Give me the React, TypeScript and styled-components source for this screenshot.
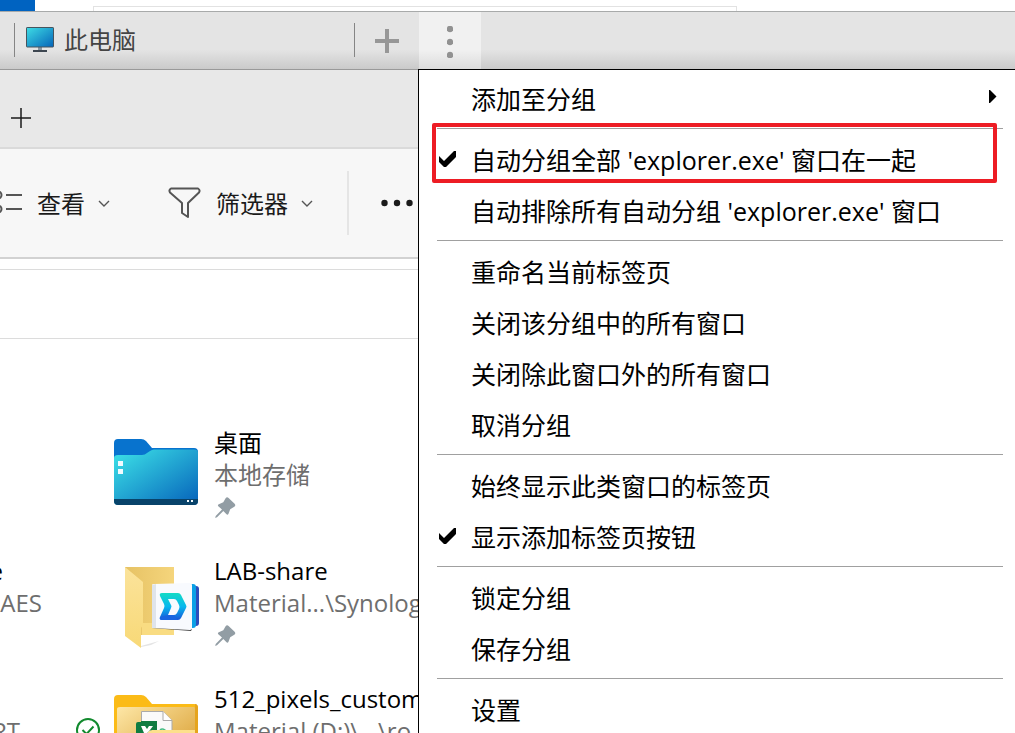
import React from 'react';
import styled, { createGlobalStyle } from 'styled-components';

const Global = createGlobalStyle`
  * { box-sizing: border-box; }
  html, body, #root { height: 100%; }
  body {
    margin: 0;
    overflow: hidden;
    background: #fff;
    color: #000;
    font-family: "Open Sans", "Noto Sans CJK SC", sans-serif;
    font-size: 24px;
    line-height: 32px;
  }
  button {
    margin: 0;
    padding: 0;
    border: 0;
    background: none;
    color: inherit;
    font: inherit;
    text-align: left;
    white-space: nowrap;
  }
  svg { display: block; flex: none; }
`;

const Page = styled.div`
  display: flex;
  flex-direction: column;
  height: 100vh;
  overflow: hidden;
`;

const Backdrop = styled.div`
  display: flex;
  flex: none;
  align-items: flex-end;
  height: 11px;
`;

const BlueBlock = styled.div`
  width: 35px;
  height: 11px;
  margin-right: 58px;
  background: #0063c1;
`;

const BackWindow = styled.div`
  flex: 0 1 644px;
  height: 5px;
  border: 1px solid #e2e2e2;
  border-bottom: 0;
`;

const TabStrip = styled.header`
  position: relative;
  display: flex;
  flex: none;
  height: 59px;
  padding-left: 14px;
  border-top: 1px solid #a8aaaa;
  border-bottom: 1px solid #999;
  background: linear-gradient(#e4e4e4 0 66%, #cacaca);
`;

const Tab = styled.button`
  display: flex;
  flex: none;
  align-items: center;
  gap: 9px;
  width: 341px;
  height: 34px;
  margin-top: 11px;
  padding-left: 11px;
  border: solid #858585;
  border-width: 0 1px;
  color: #444;
`;

const StripButton = styled.button<{ $open?: boolean }>`
  display: flex;
  flex: none;
  align-items: center;
  justify-content: center;
  width: ${p => (p.$open ? 62 : 64)}px;
  padding-top: ${p => (p.$open ? 2 : 0)}px;
  background: ${p => (p.$open ? 'linear-gradient(#f1f1f1 0 66%, #dcdcdc)' : 'none')};
`;

const MenuAnchor = styled.div`
  position: relative;
  display: flex;
`;

const Menu = styled.div`
  position: absolute;
  z-index: 2;
  top: 57px;
  left: -1px;
  width: calc(100vw - 418px);
  padding: 3px 0 24px;
  border: solid #000;
  border-width: 1px 0 0 1px;
  background: #fff;
  font-size: 25px;
`;

const MenuItem = styled.button<{ $marked?: boolean }>`
  position: relative;
  display: flex;
  align-items: center;
  width: 100%;
  height: 51px;
  padding-right: 18px;

  ${p => p.$marked && `
    &::after {
      content: "";
      position: absolute;
      z-index: 1;
      inset: -11px 18px 2px 13px;
      border: 4px solid #ed1c24;
      border-radius: 2px;
    }
  `}
`;

const CheckSlot = styled.span`
  flex: none;
  width: 52px;
  padding-left: 20px;
`;

const ItemLabel = styled.span`
  flex: 1;
`;

const SubmenuArrow = styled.svg`
  margin-bottom: 4px;
`;

const Separator = styled.hr`
  height: 1px;
  margin: 4px 12px 5px 18px;
  border: 0;
  background: #a0a0a0;
`;

const WindowTabs = styled.div`
  display: flex;
  flex: none;
  align-items: center;
  height: 79px;
  padding: 18px 0 0 11px;
  border-bottom: 2px solid #dadada;
  background: #e8e8e8;
`;

const Toolbar = styled.div`
  display: flex;
  flex: none;
  align-items: center;
  height: 110px;
  border-bottom: 2px solid #d2d2d2;
  background: #f7f7f7;
  color: #1b1b1b;
`;

const ToolButton = styled.button`
  display: flex;
  align-items: center;
  gap: 15px;
  margin-right: 58px;
`;

const ToolLabel = styled.span`
  display: flex;
  align-items: center;
  gap: 13px;
  padding-top: 2px;
`;

const ToolDivider = styled.div`
  width: 2px;
  height: 64px;
  margin: 0 32px 0 -24px;
  background: #e5e5e5;
`;

const AddressBar = styled.div`
  flex: none;
  height: 70px;
  margin-top: 10px;
  border: solid #dcdcdc;
  border-width: 1px 0;
`;

const Files = styled.main`
  display: grid;
  grid-template-columns: 76px 1fr;
  grid-auto-rows: 128px;
  padding-top: 88px;
`;

const FileName = styled.div`
  height: 32px;
`;

const Detail = styled.div`
  height: 32px;
  color: #6e6e6e;
`;

/* Tail of a line whose start is scrolled out to the left. */
const Tail = styled.div<{ $end: number }>`
  display: flex;
  justify-content: flex-end;
  width: ${p => p.$end}px;
  white-space: nowrap;
`;

const File = styled.div`
  display: flex;
  min-width: 0;
`;

const StatusSlot = styled.div`
  flex: none;
  width: 38px;
  padding-top: 35px;
`;

const FileIcon = styled.div`
  flex: none;
  width: 100px;
  padding-top: 12px;
`;

const FileText = styled.div`
  white-space: nowrap;
`;

const PinSlot = styled.div`
  padding: 6px 0 0 1px;
`;

const Check = () => (
  <svg width="17" height="17" viewBox="0 0 17 17">
    <path d="M0 5l5 5L15 0h2v6L7 16H5L0 11z" />
  </svg>
);

const Chevron = () => (
  <svg width="12" height="8" viewBox="0 0 12 8" fill="none" stroke="#555" strokeWidth="1.4">
    <path d="M1 1l5 5 5-5" />
  </svg>
);

const Pin = () => (
  <svg width="21" height="21" viewBox="0 0 21 21" fill="#929da4">
    <path d="M10.600 1.200Q12 -.5 13.600 1l6 5.800q1.500 1.600-.3 2.900l-4.100 2.600-1.700 4.500q-.8 1.500-2 .4L8.300 14 2 20.300.2 21l.5-2L7 12.600 3.300 9.200q-1-1.300.5-2L8.300 5.300z" />
  </svg>
);

const Monitor = () => (
  <svg width="29" height="26" viewBox="0 0 29 26">
    <defs>
      <linearGradient id="screen" x2="1" y2="1">
        <stop stopColor="#3edde5" />
        <stop offset="1" stopColor="#0564b9" />
      </linearGradient>
    </defs>
    <path d="M12 20h4v4h-4z" fill="#8796a2" />
    <path d="M7 23h14v2H7z" fill="#3d4650" />
    <rect x=".5" y=".5" width="27" height="19.500" rx=".6" fill="url(#screen)" stroke="#46545e" />
  </svg>
);

const DesktopFolder = () => (
  <svg width="84" height="68" viewBox="0 0 84 68">
    <defs>
      <linearGradient id="desk" x2="1" y2="1">
        <stop stopColor="#3de4e8" />
        <stop offset="1" stopColor="#0561ba" />
      </linearGradient>
    </defs>
    <path d="M0 4q0-4 4-4h23q3 0 5 2l6 7h42q4 0 4 4v20H0z" fill="#0873ce" />
    <path d="M0 19q0-3 4-3h24q3 0 5-2l3-2q2-1.500 4-1.500h40q4 0 4 3V62q0 4-4 4H4q-4 0-4-4z" fill="url(#desk)" />
    <path d="M0 60h84v2q0 4-4 4H4q-4 0-4-4z" fill="#08436a" />
    <path d="M4 22h5v5H4zM4 30h5v5H4zM73 61h2v2h-2zM77 61h2v2h-2z" fill="#f2fbff" />
  </svg>
);

const SharedFolder = () => (
  <svg width="86" height="84" viewBox="0 0 86 84">
    <defs>
      <linearGradient id="flap" x2="0" y2="1">
        <stop stopColor="#fbe39b" />
        <stop offset="1" stopColor="#f8d977" />
      </linearGradient>
      <linearGradient id="drive" x2="0" y2="1">
        <stop stopColor="#13dbc5" />
        <stop offset=".5" stopColor="#08b8ee" />
        <stop offset="1" stopColor="#1756d8" />
      </linearGradient>
      <linearGradient id="back" x2="1" y2="0">
        <stop stopColor="#e6c264" />
        <stop offset="1" stopColor="#f5d57c" />
      </linearGradient>
    </defs>
    <path d="M27 79l18-5-8 4-10 2z" fill="#e4e4e4" />
    <path d="M11 0h49v68H27L11 60z" fill="url(#back)" />
    <path d="M28 56h32v12H28z" fill="#f9dc82" />
    <path d="M11 0l18 15v43l-2 3v20L11 69z" fill="url(#flap)" />
    <path d="M76 19h6q3 0 3 3v34q0 3-3 3h-6z" fill="#2c4dbb" />
    <path d="M74 17h5q3 0 3 3v38q0 3-3 3h-5z" fill="#0aa0e6" />
    <path d="M38 61l39 3 1-2-38-3z" fill="#444" />
    <path d="M38 18q0-1 2-1l36-1q2 0 2 2v43q0 2-2 2l-38-2z" fill="#f8fafe" />
    <path d="M38 18l4-1v44h-4z" fill="#dfe4eb" />
    <path fillRule="evenodd" d="M48 26h16q2 0 3 2l5 10q1 2 0 3l-5 10q-1 2-3 2H48q-3 0-2-3l4-9q1-2 0-4l-4-8q-1-3 2-3zm6 6l3 6q1 1 0 3l-3 7h6q2 0 3-2l2-4q1-2 0-4l-2-4q-1-2-3-2z" fill="url(#drive)" />
    <path d="M46 50l8-2h6l4 5H48q-3 0-2-3z" fill="#1864e0" />
  </svg>
);

const YellowFolder = () => (
  <svg width="84" height="68" viewBox="0 0 84 68">
    <defs>
      <linearGradient id="sheet" x2="1" y2="1">
        <stop stopColor="#fde7a7" />
        <stop offset=".7" stopColor="#e2b04e" />
      </linearGradient>
    </defs>
    <path d="M0 4q0-4 4-4h23q3 0 5 2l6 7h42q4 0 4 4v51q0 4-4 4H4q-4 0-4-4z" fill="#fbbb17" />
    <path d="M81 9q3 0 3 4v54h-4z" fill="#e6a41d" />
    <path d="M3 14q0-2 3-2h74q1 0 1 2v54H3z" fill="url(#sheet)" />
    <path d="M27.500 16.500H49l9 9V50H27.500z" fill="#fafafa" stroke="#aaa" />
    <path d="M49 16.500v9h9" fill="#fff" stroke="#aaa" />
    <path d="M24 27h17q2 0 2 2v20H22V29q0-2 2-2z" fill="#107c41" />
    <path d="M27 32h4l2 4 2-4h4l-4 8h-4z" fill="#fff" />
    <path d="M46 35q2-2 5 0l2 3" fill="none" stroke="#45bd84" strokeWidth="1.500" />
    <path d="M34 37q2-2 4-2h43v33H3V41h27z" fill="#fde08c" />
    <path d="M27 41V26h16v9h-5q-3 0-5 3z" fill="#107c41" />
    <path d="M27 31h4l2 3 2-3h4l-3 4-3 3h-3z" fill="#fff" />
  </svg>
);

const Synced = () => (
  <svg width="24" height="24" viewBox="0 0 24 24" fill="none" stroke="#128a2e" strokeWidth="2">
    <circle cx="12" cy="12" r="11" fill="#fff" />
    <path d="M6.500 12l4 4 7-7.500" />
  </svg>
);

type Entry = { label: string; checked?: boolean; submenu?: boolean; marked?: boolean };

const groups: Entry[][] = [
  [{ label: '添加至分组', submenu: true }],
  [
    { label: "自动分组全部 'explorer.exe' 窗口在一起", checked: true, marked: true },
    { label: "自动排除所有自动分组 'explorer.exe' 窗口" },
  ],
  [
    { label: '重命名当前标签页' },
    { label: '关闭该分组中的所有窗口' },
    { label: '关闭除此窗口外的所有窗口' },
    { label: '取消分组' },
  ],
  [{ label: '始终显示此类窗口的标签页' }, { label: '显示添加标签页按钮', checked: true }],
  [{ label: '锁定分组' }, { label: '保存分组' }],
  [{ label: '设置' }],
];

const files = [
  { name: '桌面', detail: '本地存储', icon: <DesktopFolder />, pinned: true },
  {
    name: 'LAB-share',
    detail: 'Material...\\Synology',
    icon: <SharedFolder />,
    pinned: true,
    nameTail: { text: 'e', end: 3 },
    detailTail: { text: 'AES', end: 42 },
  },
  {
    name: '512_pixels_custom',
    detail: 'Material (D:)\\...\\ro',
    icon: <YellowFolder />,
    synced: true,
    detailTail: { text: 'RT', end: 20 },
  },
];

const GroupMenu = () => (
  <Menu role="menu">
    {groups.map((group, i) => (
      <React.Fragment key={i}>
        {i > 0 && <Separator />}
        {group.map(item => (
          <MenuItem
            key={item.label}
            role={item.checked ? 'menuitemcheckbox' : 'menuitem'}
            aria-checked={item.checked}
            $marked={item.marked}
          >
            <CheckSlot>{item.checked && <Check />}</CheckSlot>
            <ItemLabel>{item.label}</ItemLabel>
            {item.submenu && (
              <SubmenuArrow width="8" height="13" viewBox="0 0 8 13">
                <path d="M0 0h1l6.500 6.500L1 13H0z" />
              </SubmenuArrow>
            )}
          </MenuItem>
        ))}
      </React.Fragment>
    ))}
  </Menu>
);

export default function App() {
  return (
    <Page>
      <Global />
      <Backdrop>
        <BlueBlock />
        <BackWindow />
      </Backdrop>
      <TabStrip>
        <Tab>
          <Monitor />
          此电脑
        </Tab>
        <StripButton aria-label="添加标签页">
          <svg width="24" height="24" viewBox="0 0 24 24" fill="#979797">
            <path d="M10 0h4v10h10v4H14v10h-4V14H0v-4h10z" />
          </svg>
        </StripButton>
        <MenuAnchor>
          <StripButton $open aria-label="分组菜单" aria-expanded="true">
            <svg width="6" height="32" viewBox="0 0 6 32" fill="#929292">
              <circle cx="3" cy="3" r="3.200" />
              <circle cx="3" cy="16" r="3.200" />
              <circle cx="3" cy="29" r="3.200" />
            </svg>
          </StripButton>
          <GroupMenu />
        </MenuAnchor>
      </TabStrip>
      <WindowTabs>
        <button aria-label="新标签页">
          <svg width="20" height="20" viewBox="0 0 20 20" stroke="#1a1a1a" strokeWidth="1.500">
            <path d="M10 0v20M0 10h20" />
          </svg>
        </button>
      </WindowTabs>
      <Toolbar>
        <ToolButton>
          <svg width="22" height="24" viewBox="0 0 22 24" fill="none" stroke="#555" strokeWidth="2">
            <path d="M6 4h16M6 18h16" />
            <circle cx="-2" cy="4" r="3.500" />
            <circle cx="-2" cy="18" r="3.500" />
          </svg>
          <ToolLabel>
            查看
            <Chevron />
          </ToolLabel>
        </ToolButton>
        <ToolButton>
          <svg width="33" height="32" viewBox="0 0 33 32" fill="none" stroke="#555" strokeWidth="2" strokeLinejoin="round">
            <path d="M3 1.500h27q2.500 1.500 1 4L20 16v14l-6-4V16L2 5.500q-1.500-2.500 1-4z" />
          </svg>
          <ToolLabel>
            筛选器
            <Chevron />
          </ToolLabel>
        </ToolButton>
        <ToolDivider />
        <button aria-label="更多选项">
          <svg width="32" height="8" viewBox="0 0 32 8" fill="#1b1b1b">
            <circle cx="3.500" cy="4" r="3.200" />
            <circle cx="16" cy="4" r="3.200" />
            <circle cx="28.500" cy="4" r="3.200" />
          </svg>
        </button>
      </Toolbar>
      <AddressBar />
      <Files>
        {files.map(file => (
          <React.Fragment key={file.name}>
            <div>
              <FileName>{file.nameTail && <Tail $end={file.nameTail.end}>{file.nameTail.text}</Tail>}</FileName>
              <Detail>{file.detailTail && <Tail $end={file.detailTail.end}>{file.detailTail.text}</Tail>}</Detail>
            </div>
            <File>
              <StatusSlot>{file.synced && <Synced />}</StatusSlot>
              <FileIcon>{file.icon}</FileIcon>
              <FileText>
                <FileName>{file.name}</FileName>
                <Detail>{file.detail}</Detail>
                {file.pinned && (
                  <PinSlot>
                    <Pin />
                  </PinSlot>
                )}
              </FileText>
            </File>
          </React.Fragment>
        ))}
      </Files>
    </Page>
  );
}
